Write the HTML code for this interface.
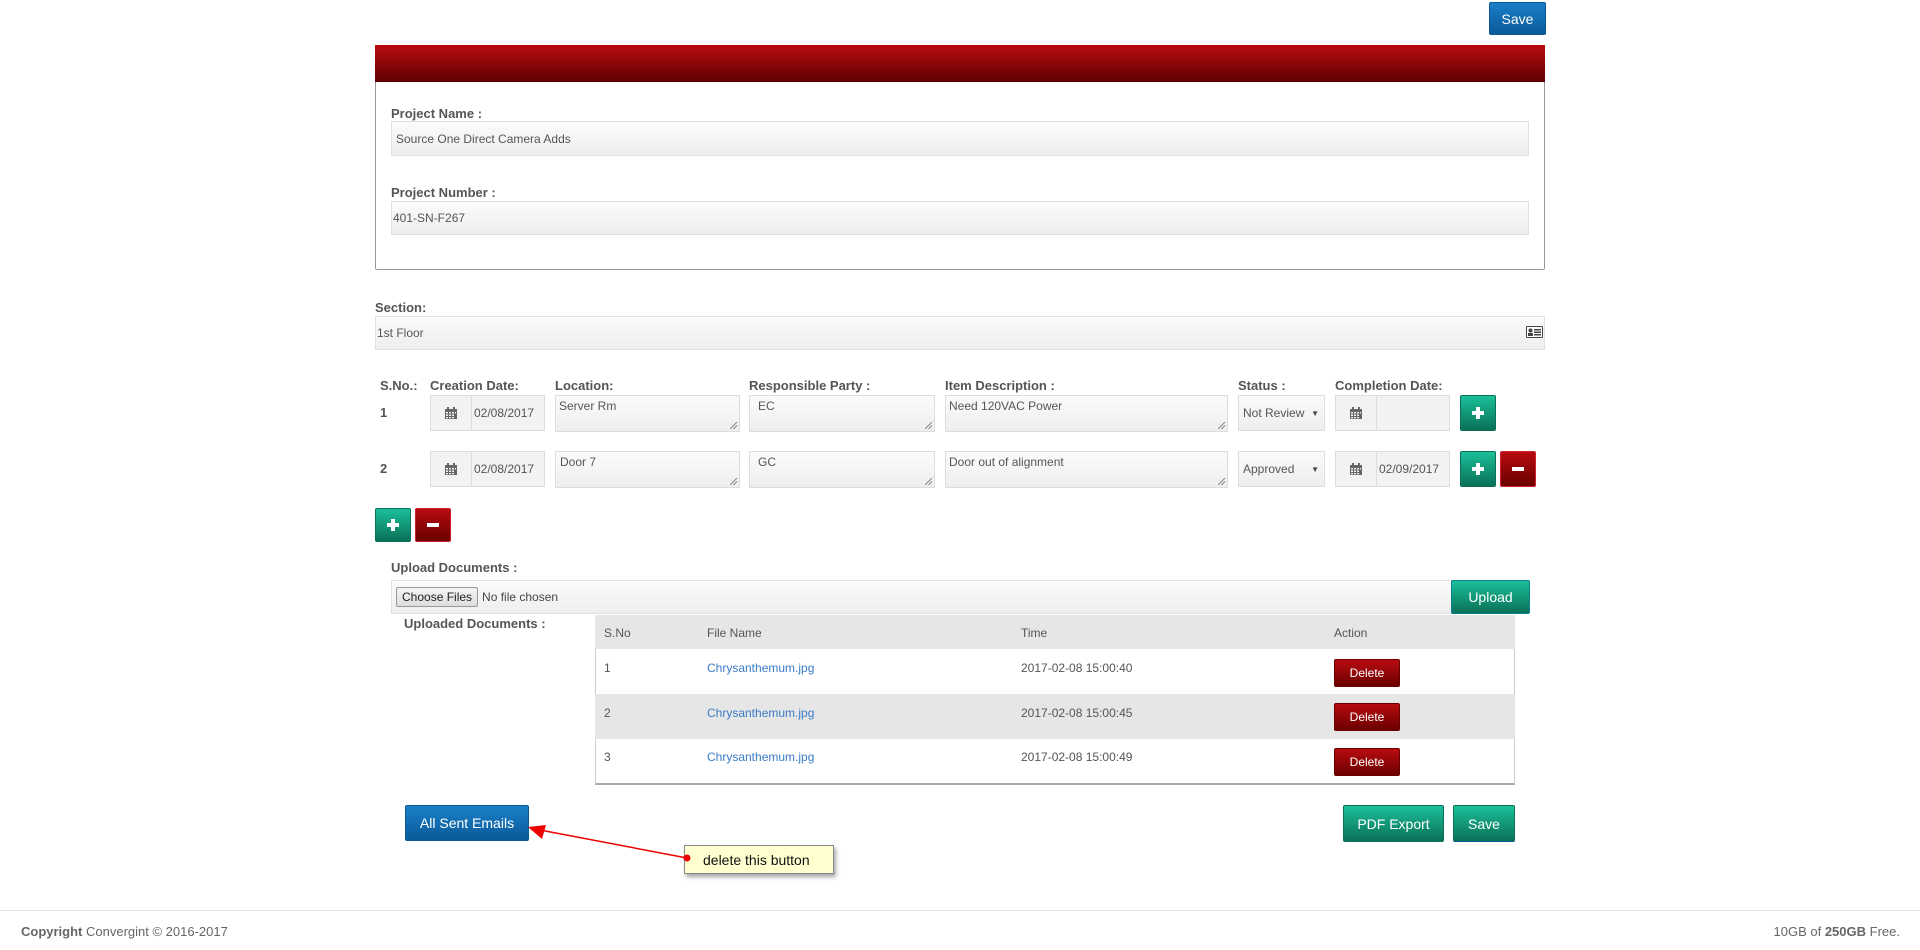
<!DOCTYPE html>
<html><head><meta charset="utf-8"><style>
*{box-sizing:border-box;margin:0;padding:0}
body{width:1920px;height:950px;background:#fff;font-family:"Liberation Sans",sans-serif;color:#555;font-size:12px;position:relative;overflow:hidden}
.a{position:absolute}
.lbl{position:absolute;font-weight:bold;font-size:13px;color:#555}
.inp{position:absolute;border:1px solid #e0e0e0;background:linear-gradient(#fbfbfb,#eeeeee);font-size:12px;color:#555;padding-left:4px;display:flex;align-items:center}
.ta{position:absolute;border:1px solid #ddd;background:linear-gradient(#fbfbfb,#eeeeee);font-size:12px;color:#555;padding:3px 3px}
.ta:after{content:"";position:absolute;right:2px;bottom:2px;width:7px;height:7px;background:linear-gradient(135deg,transparent 45%,#888 45%,#888 55%,transparent 55%,transparent 70%,#888 70%,#888 80%,transparent 80%)}
.btn{position:absolute;color:#fff;font-size:13px;display:flex;align-items:center;justify-content:center;border-radius:2px}
.blue{background:linear-gradient(#1a7fc8,#0a5a98);border:1px solid #0a5a98}
.green{background:linear-gradient(#1cbf99,#0a7058);border:1px solid #0a7058}
.red{background:linear-gradient(#b80c10,#6a0000);border:1px solid #d02030}
.dred{background:linear-gradient(#b80c10,#6a0000);border:1px solid #6a0000}
.cal{position:absolute;border:1px solid #ddd;background:#f2f2f2;display:flex}
.cal .ic{width:41px;border-right:1px solid #ddd;display:flex;align-items:center;justify-content:center}
.cal .v{flex:1;display:flex;align-items:center;padding-left:2px;font-size:12px}
.sel{position:absolute;border:1px solid #ddd;background:linear-gradient(#fbfbfb,#eeeeee);font-size:12px;display:flex;align-items:center;padding-left:4px}
.sel:after{content:"▼";position:absolute;right:5px;font-size:8px;color:#444}
.plus:before,.minus:before{content:"";position:absolute;left:50%;top:50%;width:12px;height:4px;margin:-2px 0 0 -6px;background:#fff}
.plus:after{content:"";position:absolute;left:50%;top:50%;width:4px;height:12px;margin:-6px 0 0 -2px;background:#fff}
</style></head><body>
<svg width="0" height="0" style="position:absolute"><defs><symbol id="cal" viewBox="0 0 14 14"><rect x="1" y="3" width="12" height="10" fill="#666"/><rect x="3" y="1" width="2" height="3" fill="#666"/><rect x="9" y="1" width="2" height="3" fill="#666"/><g fill="#f2f2f2"><rect x="2" y="6" width="2" height="1.5"/><rect x="5" y="6" width="2" height="1.5"/><rect x="8" y="6" width="2" height="1.5"/><rect x="11" y="6" width="1" height="1.5"/><rect x="2" y="8.5" width="2" height="1.5"/><rect x="5" y="8.5" width="2" height="1.5"/><rect x="8" y="8.5" width="2" height="1.5"/><rect x="2" y="11" width="2" height="1.3"/><rect x="5" y="11" width="2" height="1.3"/><rect x="8" y="11" width="2" height="1.3"/></g></symbol></defs></svg>

<div class="btn blue" style="left:1489px;top:2px;width:57px;height:33px;font-size:14px">Save</div>

<div class="a" style="left:375px;top:45px;width:1170px;height:225px;border:1px solid #999;border-radius:2px"></div>
<div class="a" style="left:375px;top:45px;width:1170px;height:37px;background:linear-gradient(#b80c10,#5e0000)"></div>

<div class="lbl" style="left:391px;top:106px">Project Name :</div>
<div class="inp" style="left:391px;top:121px;width:1138px;height:35px">Source One Direct Camera Adds</div>
<div class="lbl" style="left:391px;top:185px">Project Number :</div>
<div class="inp" style="left:391px;top:201px;width:1138px;height:34px;padding-left:1px">401-SN-F267</div>

<div class="lbl" style="left:375px;top:300px">Section:</div>
<div class="inp" style="left:375px;top:316px;width:1170px;height:34px;padding-left:1px">1st Floor</div>
<svg class="a" style="left:1526px;top:326px" width="17" height="12" viewBox="0 0 17 12"><rect x="0.5" y="0.5" width="16" height="11" rx="1" fill="#fff" stroke="#444"/><circle cx="4.5" cy="4.5" r="2" fill="#444"/><rect x="2" y="7" width="5" height="3" fill="#444"/><rect x="8" y="3" width="7" height="1.5" fill="#444"/><rect x="8" y="5.5" width="7" height="1.5" fill="#444"/><rect x="8" y="8" width="7" height="1.5" fill="#444"/></svg>

<div class="lbl" style="left:380px;top:378px">S.No.:</div>
<div class="lbl" style="left:430px;top:378px">Creation Date:</div>
<div class="lbl" style="left:555px;top:378px">Location:</div>
<div class="lbl" style="left:749px;top:378px">Responsible Party :</div>
<div class="lbl" style="left:945px;top:378px">Item Description :</div>
<div class="lbl" style="left:1238px;top:378px">Status :</div>
<div class="lbl" style="left:1335px;top:378px">Completion Date:</div>

<div class="lbl" style="left:380px;top:405px">1</div>
<div class="cal" style="left:430px;top:395px;width:115px;height:36px"><div class="ic"><svg width="14" height="14"><use href="#cal"/></svg></div><div class="v">02/08/2017</div></div>
<div class="ta" style="left:555px;top:395px;width:185px;height:37px">Server Rm</div>
<div class="ta" style="left:749px;top:395px;width:186px;height:37px;padding-left:8px">EC</div>
<div class="ta" style="left:945px;top:395px;width:283px;height:37px">Need 120VAC Power</div>
<div class="sel" style="left:1238px;top:395px;width:87px;height:36px">Not Review</div>
<div class="cal" style="left:1335px;top:395px;width:115px;height:36px"><div class="ic"><svg width="14" height="14"><use href="#cal"/></svg></div><div class="v"></div></div>
<div class="btn green plus" style="left:1460px;top:395px;width:36px;height:36px"></div>

<div class="lbl" style="left:380px;top:461px">2</div>
<div class="cal" style="left:430px;top:451px;width:115px;height:36px"><div class="ic"><svg width="14" height="14"><use href="#cal"/></svg></div><div class="v">02/08/2017</div></div>
<div class="ta" style="left:555px;top:451px;width:185px;height:37px;padding-left:4px">Door 7</div>
<div class="ta" style="left:749px;top:451px;width:186px;height:37px;padding-left:8px">GC</div>
<div class="ta" style="left:945px;top:451px;width:283px;height:37px">Door out of alignment</div>
<div class="sel" style="left:1238px;top:451px;width:87px;height:36px">Approved</div>
<div class="cal" style="left:1335px;top:451px;width:115px;height:36px"><div class="ic"><svg width="14" height="14"><use href="#cal"/></svg></div><div class="v">02/09/2017</div></div>
<div class="btn green plus" style="left:1460px;top:451px;width:36px;height:36px"></div>
<div class="btn red minus" style="left:1500px;top:451px;width:36px;height:36px"></div>

<div class="btn green plus" style="left:375px;top:508px;width:36px;height:34px"></div>
<div class="btn red minus" style="left:415px;top:508px;width:36px;height:34px"></div>

<div class="lbl" style="left:391px;top:560px">Upload Documents :</div>
<div class="inp" style="left:391px;top:580px;width:1062px;height:34px">
<span style="border:1px solid #999;background:linear-gradient(#f4f4f4,#ddd);color:#222;padding:2px 5px;font-size:12px;border-radius:2px">Choose Files</span><span style="margin-left:4px;color:#444">No file chosen</span></div>
<div class="btn green" style="left:1451px;top:580px;width:79px;height:34px;font-size:14px;border-color:#0a8090">Upload</div>

<div class="lbl" style="left:404px;top:616px">Uploaded Documents :</div>
<div class="a" style="left:595px;top:615px;width:920px;height:170px;border:1px solid #ccc;border-top:none;border-bottom:2px solid #aaa"></div>
<div class="a" style="left:595px;top:615px;width:920px;height:34px;background:#e6e6e6"></div>
<div class="a" style="left:595px;top:694px;width:920px;height:45px;background:#e6e6e6"></div>
<div class="a" style="left:604px;top:626px">S.No</div><div class="a" style="left:707px;top:626px">File Name</div><div class="a" style="left:1021px;top:626px">Time</div><div class="a" style="left:1334px;top:626px">Action</div>
<div class="a" style="left:604px;top:661px">1</div><div class="a" style="left:707px;top:661px;color:#3a7bc8">Chrysanthemum.jpg</div><div class="a" style="left:1021px;top:661px">2017-02-08 15:00:40</div>
<div class="btn dred" style="left:1334px;top:659px;width:66px;height:28px;font-size:12px">Delete</div>
<div class="a" style="left:604px;top:706px">2</div><div class="a" style="left:707px;top:706px;color:#3a7bc8">Chrysanthemum.jpg</div><div class="a" style="left:1021px;top:706px">2017-02-08 15:00:45</div>
<div class="btn dred" style="left:1334px;top:703px;width:66px;height:28px;font-size:12px">Delete</div>
<div class="a" style="left:604px;top:750px">3</div><div class="a" style="left:707px;top:750px;color:#3a7bc8">Chrysanthemum.jpg</div><div class="a" style="left:1021px;top:750px">2017-02-08 15:00:49</div>
<div class="btn dred" style="left:1334px;top:748px;width:66px;height:28px;font-size:12px">Delete</div>

<div class="btn blue" style="left:405px;top:805px;width:124px;height:36px;font-size:14px">All Sent Emails</div>
<div class="btn green" style="left:1343px;top:805px;width:101px;height:37px;font-size:14px">PDF Export</div>
<div class="btn green" style="left:1453px;top:805px;width:62px;height:37px;font-size:14px;border-bottom-color:#0a5a98">Save</div>

<div class="a" style="left:684px;top:845px;width:150px;height:29px;background:#ffffd0;border:1px solid #888;box-shadow:2px 3px 4px rgba(0,0,0,.35);font-size:14px;color:#111;display:flex;align-items:center;padding-left:18px">delete this button</div>
<svg class="a" style="left:520px;top:815px;z-index:2" width="180" height="60"><line x1="167" y1="43" x2="20" y2="15" stroke="#e00" stroke-width="1.5"/><polygon points="8,12 26,10 22,24" fill="#e00"/><circle cx="167" cy="43" r="3.5" fill="#e00"/></svg>

<div class="a" style="left:0;top:910px;width:1920px;height:1px;background:#e5e5e5"></div>
<div class="a" style="left:21px;top:924px;font-size:13px;color:#666"><b>Copyright</b> Convergint © 2016-2017</div>
<div class="a" style="right:20px;top:924px;font-size:13px;color:#666">10GB of <b>250GB</b> Free.</div>
</body></html>
